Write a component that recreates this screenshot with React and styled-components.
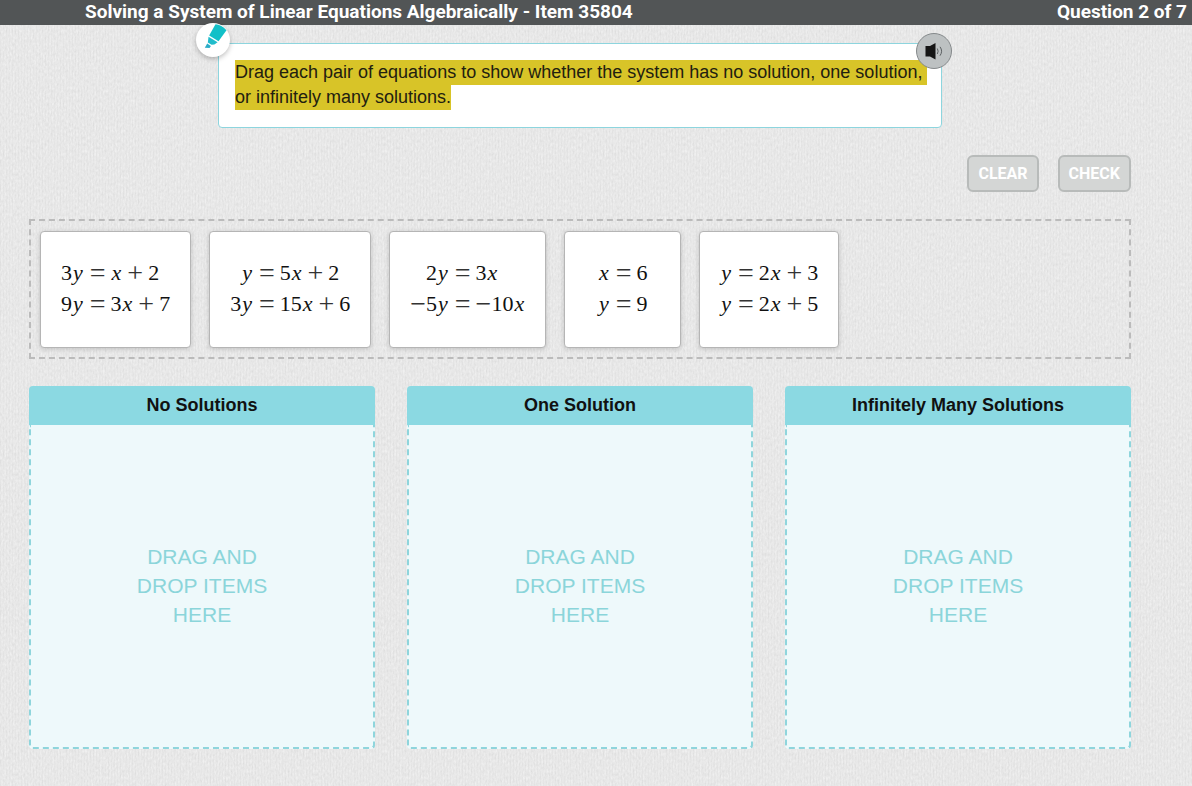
import styled, { createGlobalStyle } from "styled-components";

// woven paper texture
const texture = encodeURIComponent(
  `<svg xmlns="http://www.w3.org/2000/svg" width="300" height="300">
    <filter id="weave">
      <feTurbulence type="fractalNoise" baseFrequency="0.6 0.3" numOctaves="2" stitchTiles="stitch"/>
      <feColorMatrix values="0 0 0 0 0  0 0 0 0 0  0 0 0 0 0  0.1 0 0 0 -0.02"/>
    </filter>
    <rect width="300" height="300" filter="url(#weave)"/>
  </svg>`
);

const GlobalStyle = createGlobalStyle`
  * {
    box-sizing: border-box;
  }

  body {
    margin: 0;
    font-family: "Liberation Sans", Arial, sans-serif;
    color: #111;
    background-color: #f0f0f0;
    background-image:
      repeating-linear-gradient(90deg, rgba(0, 0, 0, 0.015) 0 1px, transparent 1px 3px),
      url("data:image/svg+xml,${texture}");
  }
`;

// top bar
const TopBar = styled.header`
  display: flex;
  justify-content: space-between;
  height: 25px;
  padding: 0 5px 0 85px;
  background: #525556;
  color: #fff;
  font-family: Roboto, "Noto Sans", sans-serif;
  font-size: 19px;
  font-weight: 700;
  line-height: 24px;
`;

const PageTitle = styled.h1`
  margin: 0;
  font-size: inherit;
`;

const Content = styled.main`
  display: flex;
  flex-direction: column;
  gap: 27px;
  padding: 18px 61px 37px 29px;
`;

// instructions
const PromptBox = styled.section`
  position: relative;
  width: 100%;
  max-width: 724px;
  margin: 0 auto;
  padding: 16px 12px 17px 16px;
  border: 1px solid #8dd5de;
  border-radius: 4px;
  background: #fff;
`;

const PromptText = styled.p`
  margin: 0;
  font-size: 18px;
  line-height: 25px;
`;

const Highlight = styled.mark`
  padding: 2px 0 3px;
  background: #d8c428;
  color: #222010;
`;

const RoundButton = styled.button`
  position: absolute;
  display: flex;
  align-items: center;
  justify-content: center;
  padding: 0;
  border-radius: 50%;
  cursor: pointer;
`;

const MarkerButton = styled(RoundButton)`
  top: -21px;
  left: -23px;
  width: 34px;
  height: 34px;
  border: 0;
  background: #fff;
  box-shadow: 0 2px 5px rgba(0, 0, 0, 0.25);
`;

const SpeakerButton = styled(RoundButton)`
  top: -11px;
  right: -11px;
  width: 36px;
  height: 36px;
  border: 1px solid #85898b;
  background: #bdc1c2;
`;

// clear / check
const Actions = styled.div`
  display: flex;
  justify-content: flex-end;
  gap: 19px;
`;

const ActionButton = styled.button`
  height: 37px;
  padding: 0 9px;
  border: 2px solid #b8bbba;
  border-radius: 6px;
  background: #d4d6d5;
  color: #fff;
  font-family: Roboto, sans-serif;
  font-size: 16px;
  font-weight: 700;
`;

// draggable equations
const Tray = styled.section`
  display: flex;
  flex-wrap: wrap;
  gap: 18px;
  padding: 10px 9px 9px;
  border: 2px dashed #bbb;
`;

const Card = styled.button`
  display: flex;
  align-items: center;
  justify-content: center;
  min-width: 117px;
  height: 117px;
  padding: 0 20px 4px;
  border: 1px solid #b5b5b5;
  border-radius: 4px;
  background: #fff;
  box-shadow: 0 1px 5px rgba(0, 0, 0, 0.18);
  color: #111;
  cursor: grab;
`;

const System = styled.span`
  display: grid;
  grid-template-columns: auto auto;
  column-gap: 1px;
  font-family: "Liberation Serif", "Times New Roman", serif;
  font-size: 22px;
  line-height: 31px;
`;

const Side = styled.span`
  display: flex;
  justify-content: ${(props) => (props.$left ? "flex-end" : "flex-start")};
  white-space: pre;
`;

const Variable = styled.i`
  padding: 0 1px;
`;

const Operator = styled.span`
  padding: 0 ${(props) => (props.$sign ? 0 : 5)}px;
  color: #333;
  font-size: 28px;
`;

// drop zones
const Zones = styled.div`
  display: grid;
  grid-template-columns: repeat(3, 1fr);
  gap: 32px;
`;

const ZoneTitle = styled.h2`
  margin: 0;
  border-radius: 4px 4px 0 0;
  background: #8bd9e2;
  font-size: 18px;
  line-height: 39px;
  text-align: center;
`;

const ZoneBody = styled.div`
  display: flex;
  align-items: center;
  justify-content: center;
  height: 324px;
  padding-bottom: 2px;
  border: 2px dashed #8fd5dc;
  border-top: 0;
  border-radius: 0 0 4px 4px;
  background: #eef9fb;
`;

const ZoneHint = styled.p`
  max-width: 140px;
  margin: 0;
  color: #8bd5da;
  font-size: 21px;
  line-height: 29px;
  text-align: center;
`;

const systems = [
  [["3y", "x+2"], ["9y", "3x+7"]],
  [["y", "5x+2"], ["3y", "15x+6"]],
  [["2y", "3x"], ["−5y", "−10x"]],
  [["x", "6"], ["y", "9"]],
  [["y", "2x+3"], ["y", "2x+5"]],
];

const zones = ["No Solutions", "One Solution", "Infinitely Many Solutions"];

// splits "3x+7" into numbers, variables and operators
function Expression({ text }) {
  return text.match(/\d+|[a-z]|[=+−]/g).map((token, idx) => {
    if (/[a-z]/.test(token)) return <Variable key={idx}>{token}</Variable>;
    if (/\d/.test(token)) return <span key={idx}>{token}</span>;
    return (
      <Operator key={idx} $sign={token === "−"}>
        {token}
      </Operator>
    );
  });
}

function EquationCard({ equations }) {
  return (
    <Card type="button" draggable>
      <System>
        {equations.map(([left, right], idx) => [
          <Side key={`left-${idx}`} $left>
            <Expression text={left} />
          </Side>,
          <Side key={`right-${idx}`}>
            <Expression text={`=${right}`} />
          </Side>,
        ])}
      </System>
    </Card>
  );
}

function MarkerIcon() {
  return (
    <svg width="34" height="34" viewBox="0 0 34 34" aria-hidden="true">
      <path d="M19.5 1.2 Q25.5 1.5 30.5 7.2 L22.5 18.2 L13.2 12.6 Z" fill="#12c0c8" />
      <path d="M12.5 13.8 L21.6 19.3 L18.4 21.4 L15.6 21.8 L11.8 19.4 Z" fill="#20bccb" />
      <path d="M11.2 20.6 L14.9 22.9 L13.6 25 L8.8 24.8 Z" fill="#2bacc8" />
    </svg>
  );
}

function SpeakerIcon() {
  return (
    <svg width="34" height="34" viewBox="0 0 34 34" fill="none" aria-hidden="true">
      <path d="M8.5 12 H13 L18.5 9 V25.5 L13 22.5 H8.5 Z" fill="#151515" />
      <path d="M20.3 14.5 Q22 17.2 20.3 20 M23 12.8 Q26.2 17.2 23 21.7" stroke="#5c6062" />
    </svg>
  );
}

function App() {
  return (
    <>
      <GlobalStyle />
      <TopBar>
        <PageTitle>Solving a System of Linear Equations Algebraically - Item 35804</PageTitle>
        <span>Question 2 of 7</span>
      </TopBar>
      <Content>
        <PromptBox>
          <PromptText>
            <Highlight>
              Drag each pair of equations to show whether the system has no solution, one
              solution,{"\u00a0"}
              <br />
              or infinitely many solutions.
            </Highlight>
          </PromptText>
          <MarkerButton type="button" aria-label="Highlighter">
            <MarkerIcon />
          </MarkerButton>
          <SpeakerButton type="button" aria-label="Read aloud">
            <SpeakerIcon />
          </SpeakerButton>
        </PromptBox>
        <Actions>
          <ActionButton type="button">CLEAR</ActionButton>
          <ActionButton type="button">CHECK</ActionButton>
        </Actions>
        <Tray>
          {systems.map((equations, idx) => (
            <EquationCard key={idx} equations={equations} />
          ))}
        </Tray>
        <Zones>
          {zones.map((title) => (
            <section key={title}>
              <ZoneTitle>{title}</ZoneTitle>
              <ZoneBody>
                <ZoneHint>DRAG AND DROP ITEMS HERE</ZoneHint>
              </ZoneBody>
            </section>
          ))}
        </Zones>
      </Content>
    </>
  );
}

export default App;
